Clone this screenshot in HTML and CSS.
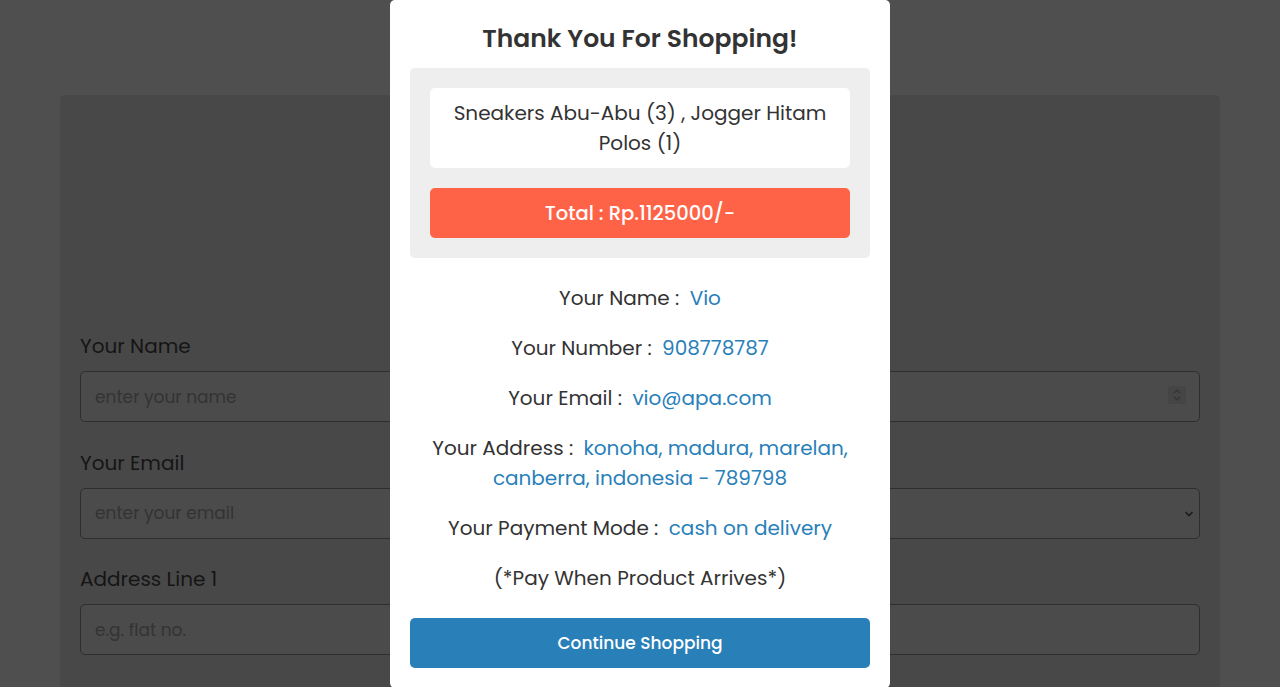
FILE: index.html
```html
<!DOCTYPE html>
<html lang="en">
<head>
<meta charset="utf-8">
<title>Checkout</title>
<link rel="stylesheet" href="styles.css">
</head>
<body>
<div class="page">
  <div class="container">
    <div class="container-head"></div>
    <form class="form">
      <div class="col">
        <div class="field">
          <label class="label">Your Name</label>
          <input class="input" type="text" placeholder="enter your name">
        </div>
        <div class="field">
          <label class="label">Your Email</label>
          <input class="input" type="email" placeholder="enter your email">
        </div>
        <div class="field">
          <label class="label">Address Line 1</label>
          <input class="input" type="text" placeholder="e.g. flat no.">
        </div>
      </div>
      <div class="col">
        <div class="field">
          <span class="label"></span>
          <div class="input-wrap">
            <input class="input" type="text" aria-label="Your Number">
            <span class="spinner">
              <svg width="14" height="18" viewBox="0 0 14 18"><path d="M4 7 L7 4 L10 7" fill="none" stroke="#333" stroke-width="1.1"/><path d="M4 11 L7 14 L10 11" fill="none" stroke="#333" stroke-width="1.1"/></svg>
            </span>
          </div>
        </div>
        <div class="field">
          <span class="label"></span>
          <div class="input-wrap">
            <div class="input select"></div>
            <svg class="chevron" width="10" height="8" viewBox="0 0 10 8"><path d="M1.5 2 L5 5.5 L8.5 2" fill="none" stroke="#1c1c1c" stroke-width="1.6"/></svg>
          </div>
        </div>
        <div class="field">
          <span class="label"></span>
          <input class="input" type="text" aria-label="Address Line 2">
        </div>
      </div>
    </form>
  </div>
</div>

<div class="modal">
  <h3 class="modal-title">Thank You For Shopping!</h3>
  <div class="order">
    <div class="order-items">Sneakers Abu-Abu (3) , Jogger Hitam Polos (1)</div>
    <div class="order-total">Total : Rp.1125000/-</div>
  </div>
  <div class="details">
    <p class="row">Your Name : <span class="val">Vio</span></p>
    <p class="row">Your Number : <span class="val">908778787</span></p>
    <p class="row">Your Email : <span class="val">vio@apa.com</span></p>
    <p class="row">Your Address : <span class="val">konoha, madura, marelan, canberra, indonesia - 789798</span></p>
    <p class="row">Your Payment Mode : <span class="val">cash on delivery</span></p>
    <p class="row">(*Pay When Product Arrives*)</p>
  </div>
  <button class="btn" type="button">Continue Shopping</button>
</div>
</body>
</html>
```

FILE: styles.css
```css
* {
  box-sizing: border-box;
  margin: 0;
  padding: 0;
}

html, body {
  height: 100%;
  overflow: hidden;
}

body {
  background: #4f4f4f;
  font-family: "Poppins", "Open Sans", "DejaVu Sans", sans-serif;
  color: #333;
}

.page {
  padding: 95px 60px 0;
}

.container {
  background: #484848;
  border-radius: 5px;
  padding: 20px;
  min-height: 700px;
}

.container-head {
  height: 216px;
}

.form {
  display: flex;
  gap: 20px;
}

.col {
  flex: 1;
  display: flex;
  flex-direction: column;
  gap: 25.5px;
}

.field {
  display: flex;
  flex-direction: column;
  gap: 10px;
}

.label {
  display: block;
  height: 30px;
  font-size: 20px;
  line-height: 30px;
  color: #151515;
}

.input-wrap {
  position: relative;
}

.input {
  width: 100%;
  height: 51px;
  border: 1px solid #2e2e2e;
  border-radius: 5px;
  background: #4b4b4b;
  padding: 0 14px;
  font-family: inherit;
  font-size: 17px;
  color: #1c1c1c;
  outline: none;
  display: block;
}

.input::placeholder {
  color: #333333;
  opacity: 1;
}

.spinner {
  position: absolute;
  right: 14px;
  top: 15px;
  width: 18px;
  height: 18px;
  background: #454545;
  display: flex;
  align-items: center;
  justify-content: center;
}

.chevron {
  position: absolute;
  right: 6px;
  top: 22px;
}

.modal {
  position: fixed;
  top: 0;
  left: 50%;
  transform: translateX(-50%);
  width: 500px;
  background: #fff;
  border-radius: 5px;
  padding: 20px;
  text-align: center;
}

.modal-title {
  font-size: 25px;
  line-height: 38px;
  font-weight: 600;
  color: #333;
  margin-bottom: 10px;
}

.order {
  background: #eee;
  border-radius: 5px;
  padding: 20px;
  display: flex;
  flex-direction: column;
  gap: 20px;
}

.order-items {
  background: #fff;
  border-radius: 5px;
  padding: 10px 15px;
  font-size: 20px;
  line-height: 30px;
  color: #333;
}

.order-total {
  background: #ff6347;
  border-radius: 5px;
  height: 50px;
  display: flex;
  align-items: center;
  justify-content: center;
  font-size: 19.5px;
  font-weight: 500;
  color: #fff;
}

.details {
  display: flex;
  flex-direction: column;
  gap: 20px;
  padding: 25px 0;
}

.row {
  font-size: 20px;
  line-height: 30px;
  color: #333;
}

.val {
  color: #2980b9;
  margin-left: 5px;
}

.btn {
  width: 100%;
  height: 50px;
  border: none;
  border-radius: 5px;
  background: #2980b9;
  color: #fff;
  font-family: inherit;
  font-size: 17px;
  font-weight: 500;
  cursor: pointer;
}
```
